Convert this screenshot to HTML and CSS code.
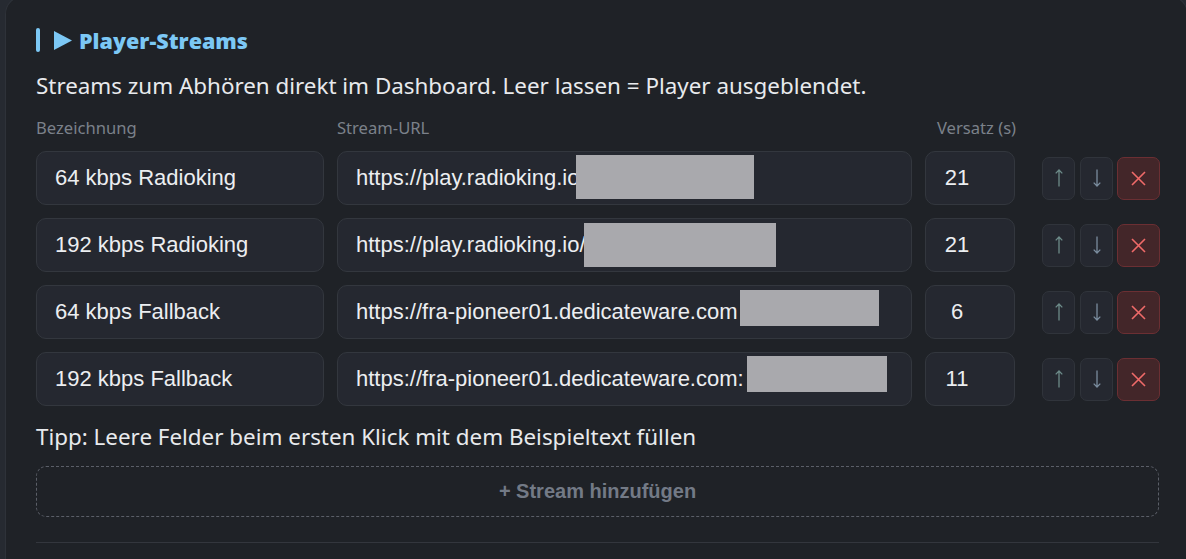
FILE: index.html
```html
<!DOCTYPE html>
<html lang="de">
<head>
<meta charset="utf-8">
<title>Player-Streams</title>
<link rel="stylesheet" href="styles.css">
</head>
<body>
<section class="card">
  <h2 class="title">
    <span class="bar"></span>
    <svg class="tri" width="18" height="19" viewBox="0 0 18 19"><polygon points="0,0 18,9.5 0,19" fill="#7cc8f5"/></svg>
    <span>Player-Streams</span>
  </h2>
  <p class="desc">Streams zum Abhören direkt im Dashboard. Leer lassen = Player ausgeblendet.</p>

  <div class="grid labels">
    <div>Bezeichnung</div>
    <div>Stream-URL</div>
    <div>Versatz (s)</div>
    <div></div>
  </div>

  <div class="rows">
    <div class="grid row">
      <div class="field">64 kbps Radioking</div>
      <div class="field url">https://play.radioking.io<span class="redact r1"></span></div>
      <div class="field num">21</div>
      <div class="actions">
        <button class="btn up"><svg width="8" height="18" viewBox="0 0 8 18"><path d="M4 1V17.5M0.7 4.4L4 1L7.3 4.4"/></svg></button>
        <button class="btn down"><svg width="8" height="18" viewBox="0 0 8 18"><path d="M4 0.5V17M0.7 13.6L4 17L7.3 13.6"/></svg></button>
        <button class="btn del"><svg width="15" height="15" viewBox="0 0 15 15"><path d="M1 1L14 14M14 1L1 14"/></svg></button>
      </div>
    </div>
    <div class="grid row">
      <div class="field">192 kbps Radioking</div>
      <div class="field url">https://play.radioking.io/<span class="redact r2"></span></div>
      <div class="field num">21</div>
      <div class="actions">
        <button class="btn up"><svg width="8" height="18" viewBox="0 0 8 18"><path d="M4 1V17.5M0.7 4.4L4 1L7.3 4.4"/></svg></button>
        <button class="btn down"><svg width="8" height="18" viewBox="0 0 8 18"><path d="M4 0.5V17M0.7 13.6L4 17L7.3 13.6"/></svg></button>
        <button class="btn del"><svg width="15" height="15" viewBox="0 0 15 15"><path d="M1 1L14 14M14 1L1 14"/></svg></button>
      </div>
    </div>
    <div class="grid row">
      <div class="field">64 kbps Fallback</div>
      <div class="field url">https://fra-pioneer01.dedicateware.com<span class="redact r3"></span></div>
      <div class="field num">6</div>
      <div class="actions">
        <button class="btn up"><svg width="8" height="18" viewBox="0 0 8 18"><path d="M4 1V17.5M0.7 4.4L4 1L7.3 4.4"/></svg></button>
        <button class="btn down"><svg width="8" height="18" viewBox="0 0 8 18"><path d="M4 0.5V17M0.7 13.6L4 17L7.3 13.6"/></svg></button>
        <button class="btn del"><svg width="15" height="15" viewBox="0 0 15 15"><path d="M1 1L14 14M14 1L1 14"/></svg></button>
      </div>
    </div>
    <div class="grid row">
      <div class="field">192 kbps Fallback</div>
      <div class="field url">https://fra-pioneer01.dedicateware.com:<span class="redact r4"></span></div>
      <div class="field num">11</div>
      <div class="actions">
        <button class="btn up"><svg width="8" height="18" viewBox="0 0 8 18"><path d="M4 1V17.5M0.7 4.4L4 1L7.3 4.4"/></svg></button>
        <button class="btn down"><svg width="8" height="18" viewBox="0 0 8 18"><path d="M4 0.5V17M0.7 13.6L4 17L7.3 13.6"/></svg></button>
        <button class="btn del"><svg width="15" height="15" viewBox="0 0 15 15"><path d="M1 1L14 14M14 1L1 14"/></svg></button>
      </div>
    </div>
  </div>

  <p class="tip">Tipp: Leere Felder beim ersten Klick mit dem Beispieltext füllen</p>
  <button class="add">+ Stream hinzufügen</button>
  <hr class="sep">
</section>
</body>
</html>
```

FILE: styles.css
```css
html, body {
  margin: 0;
  padding: 0;
  background: #262a31;
  overflow: hidden;
  height: 559px;
}

.card {
  box-sizing: border-box;
  width: 1183px;
  margin: -4px 0 0 5px;
  padding: 31px 28px 16px 30px;
  background: #1f2227;
  border: 1px solid #2e3239;
  border-bottom: 0;
  border-radius: 18px 18px 0 0;
  font-family: "Noto Sans", "Open Sans", sans-serif;
  color: #e8eaed;
}

.title {
  display: flex;
  align-items: center;
  height: 24px;
  margin: 0;
  font-family: "Open Sans", "Noto Sans", sans-serif;
  font-weight: 800;
  font-size: 21.5px;
  color: #7cc8f5;
}

.bar {
  width: 4px;
  height: 24px;
  border-radius: 2px;
  background: #7cc8f5;
  margin-right: 14px;
}

.tri {
  margin-right: 7px;
}

.desc {
  margin: 20px 0 0;
  font-size: 22.4px;
  line-height: 28px;
}

.grid {
  display: grid;
  grid-template-columns: 288px 575px 90px 1fr;
  column-gap: 13px;
}

.labels {
  margin-top: 18px;
  font-size: 16.6px;
  line-height: 20px;
  color: #7b818a;
  white-space: nowrap;
}

.labels div:nth-child(3) {
  padding-left: 12px;
}

.rows {
  margin-top: 13px;
  display: flex;
  flex-direction: column;
  gap: 13px;
}

.row {
  align-items: center;
}

.field {
  position: relative;
  box-sizing: border-box;
  height: 54px;
  display: flex;
  align-items: center;
  padding: 0 18px;
  background: #252830;
  border: 1px solid #33373e;
  border-radius: 10px;
  font-family: "Liberation Sans", Arial, sans-serif;
  font-size: 22px;
  color: #eceef1;
  white-space: nowrap;
}

.field.num {
  justify-content: center;
  padding: 0 34px 0 8px;
}

.redact {
  position: absolute;
  background: #a9a9ad;
}

.r1 { left: 238px; top: 3px; width: 178px; height: 44px; }
.r2 { left: 246px; top: 4px; width: 192px; height: 44px; }
.r3 { left: 402px; top: 4px; width: 139px; height: 36px; }
.r4 { left: 409px; top: 3px; width: 140px; height: 36px; }

.actions {
  display: flex;
  align-items: center;
  padding-left: 14px;
}

.btn {
  box-sizing: border-box;
  height: 43px;
  width: 33px;
  padding: 0;
  display: flex;
  align-items: center;
  justify-content: center;
  background: #252830;
  border: 1px solid #30343b;
  border-radius: 7px;
  cursor: pointer;
}

.btn svg path {
  fill: none;
  stroke-width: 1.3;
}

.up svg path { stroke: #6d8b89; }
.down svg path { stroke: #7a8c9e; }

.down {
  margin-left: 5px;
}

.del {
  width: 43px;
  margin-left: 4px;
  background: #432629;
  border-color: #6b2f33;
}

.del svg path {
  stroke: #f06a69;
  stroke-width: 1.6;
}

.tip {
  margin: 17px 0 0;
  font-size: 22.4px;
  line-height: 28px;
}

.add {
  display: block;
  box-sizing: border-box;
  width: 100%;
  height: 51px;
  margin-top: 15px;
  background: transparent;
  border: 1px dashed #5b5f68;
  border-radius: 10px;
  font-family: "Liberation Sans", Arial, sans-serif;
  font-weight: bold;
  font-size: 20px;
  color: #737a86;
  cursor: pointer;
}

.sep {
  margin: 25px 0 0;
  border: 0;
  border-top: 1px solid #33363d;
}
```
